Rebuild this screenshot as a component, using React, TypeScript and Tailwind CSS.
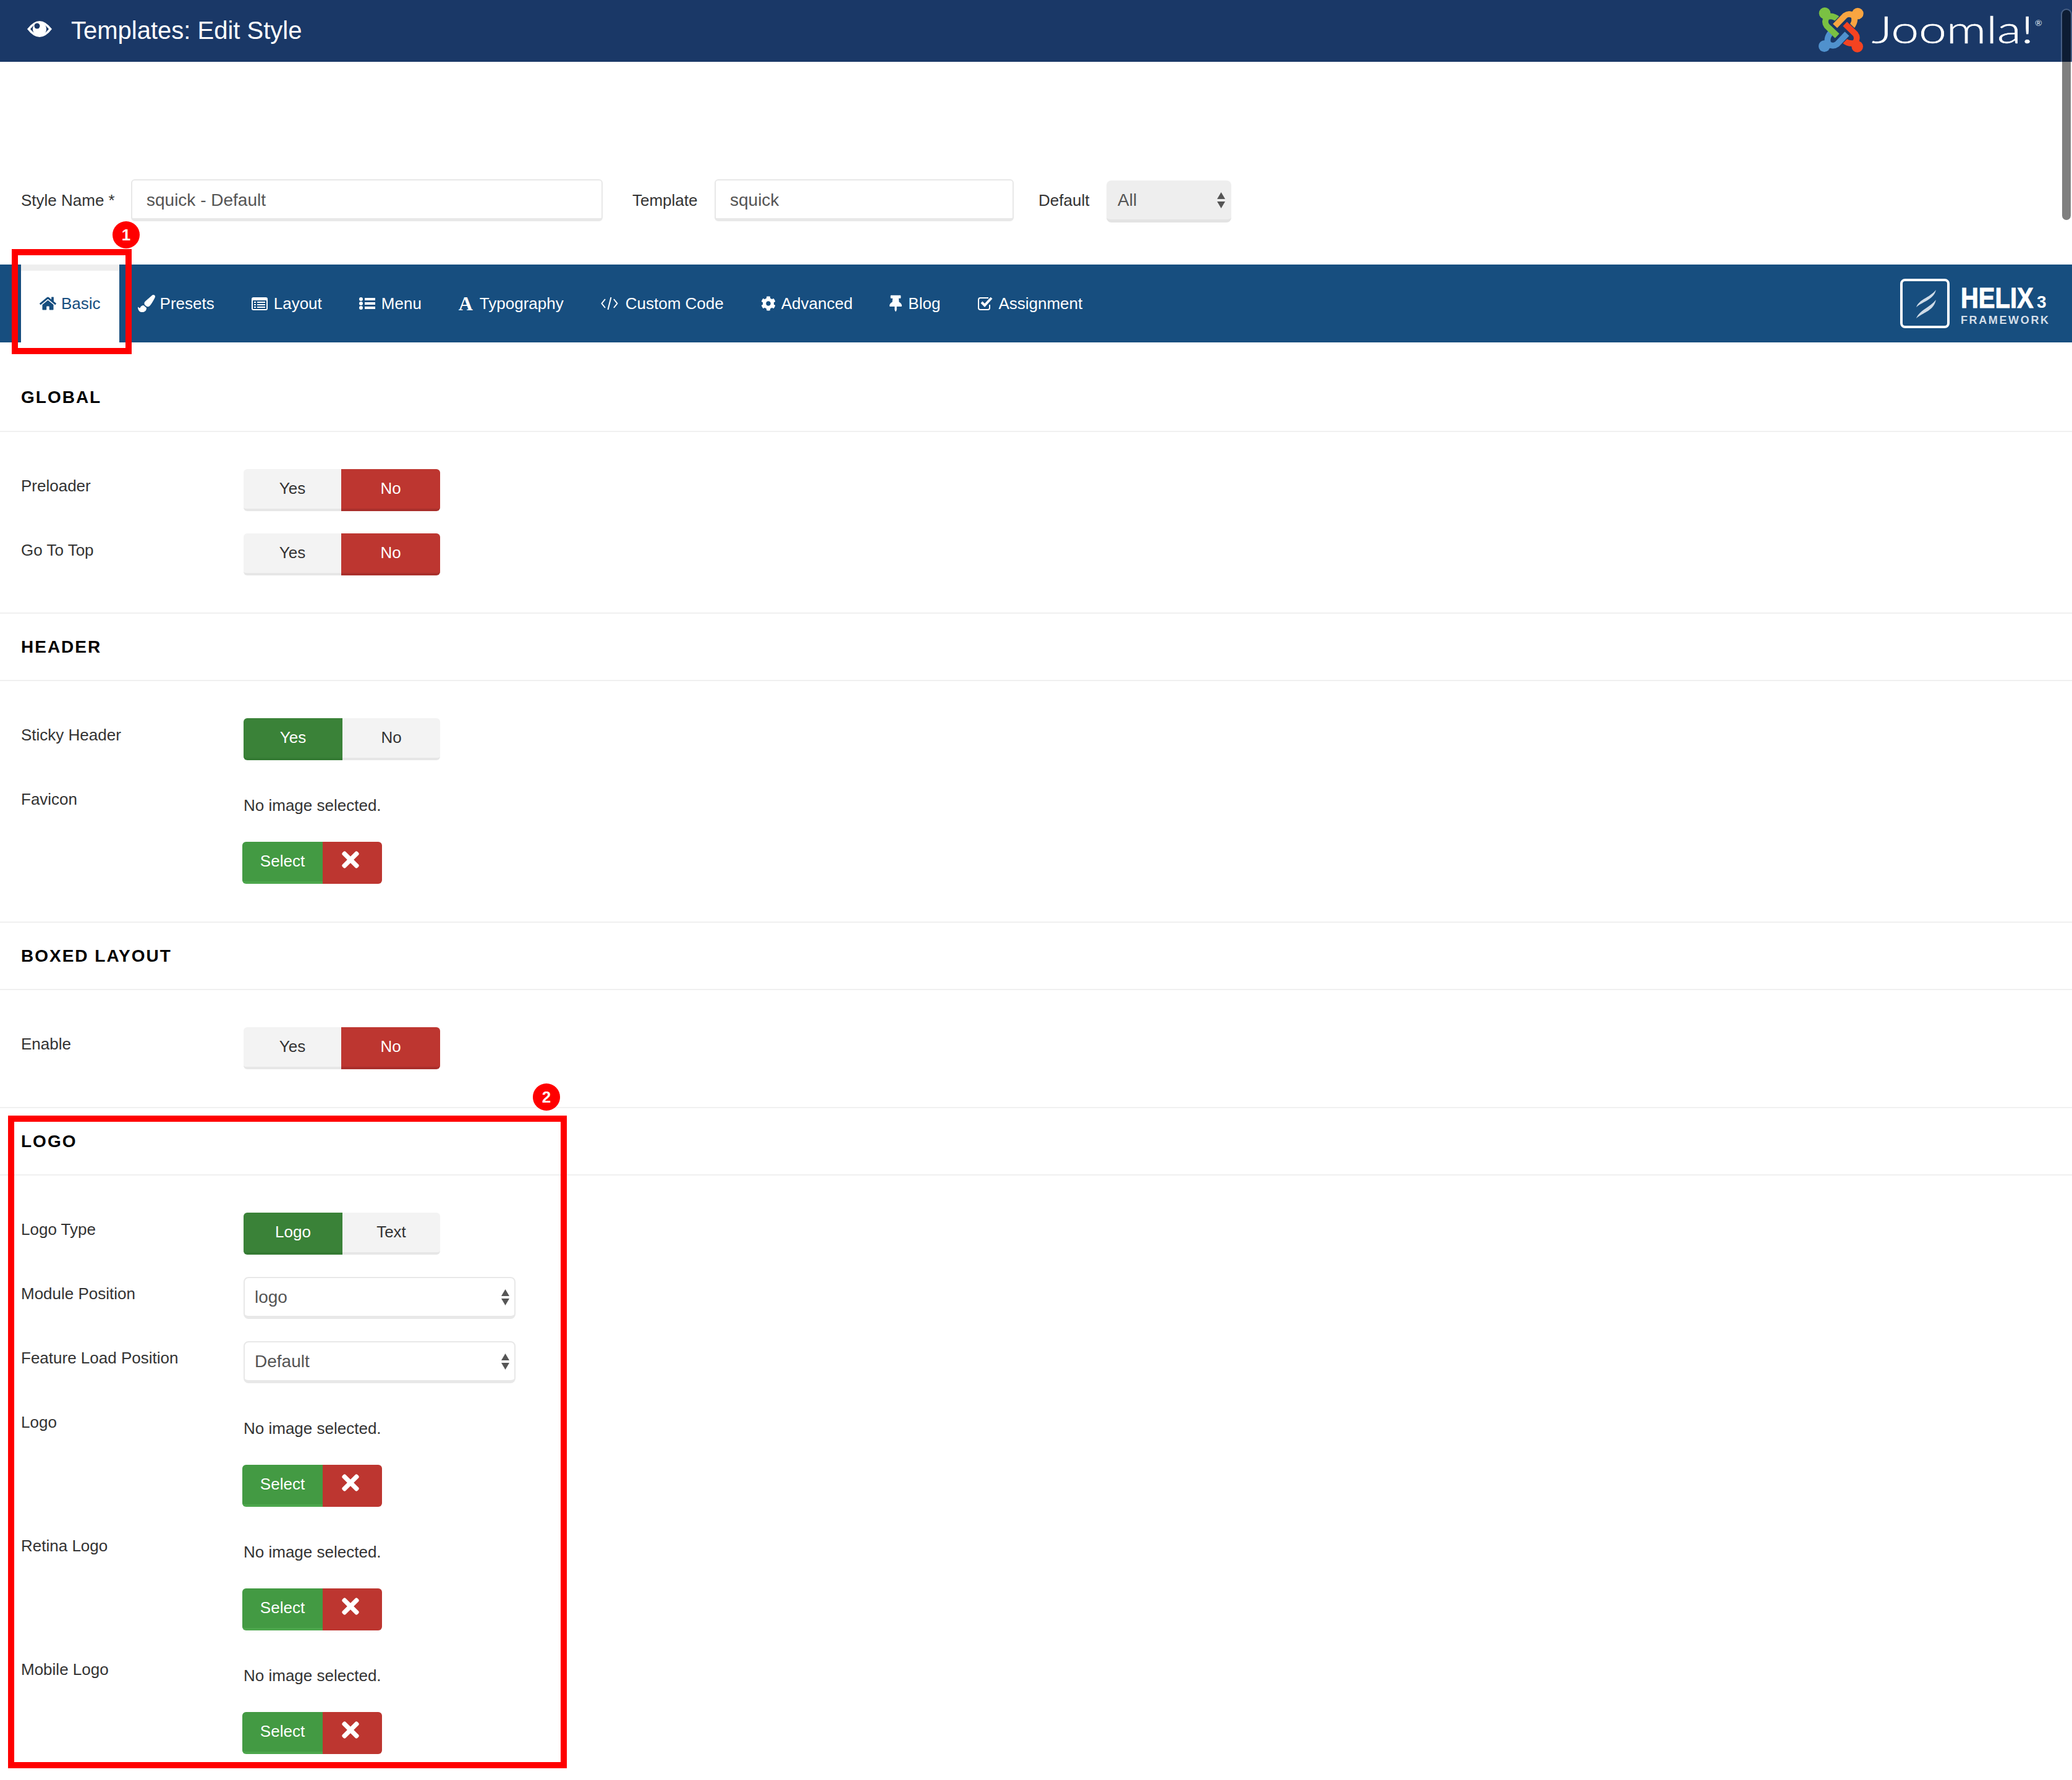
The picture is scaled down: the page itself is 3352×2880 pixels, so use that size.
import type {ReactNode} from 'react';
import {FaCog, FaHome, FaPaintBrush, FaThumbtack, FaTimes} from 'react-icons/fa';

type Tab = {label: string; icon: ReactNode; gap: string; active?: boolean};

const CodeIcon = () => (
  <svg viewBox="0 0 28 24" className="h-[24px] w-[28px]" fill="none" stroke="currentColor" strokeWidth="2">
    <path d="M7 5 1.500 12 7 19M21 5l5.500 7L21 19M16.500 2l-5 20" />
  </svg>
);

const ListIcon = () => (
  <svg viewBox="0 0 26 20" className="h-[20px] w-[26px] fill-current">
    <circle cx="3" cy="3" r="3" />
    <circle cx="3" cy="10" r="3" />
    <circle cx="3" cy="17" r="3" />
    <path d="M9 1h17v4H9zM9 8h17v4H9zM9 15h17v4H9z" />
  </svg>
);

const LayoutIcon = () => (
  <svg viewBox="0 0 26 21" className="h-[21px] w-[26px]">
    <rect width="26" height="21" rx="3" fill="currentColor" />
    <rect x="2" y="5" width="22" height="14" fill="#174e7f" />
    <path d="M4 7h3v2H4zM9 7h13v2H9zM4 11h3v2H4zM9 11h13v2H9zM4 15h3v2H4zM9 15h13v2H9z" fill="currentColor" />
  </svg>
);

const CheckIcon = () => (
  <svg viewBox="0 0 26 26" className="h-[26px] w-[26px]" fill="none" stroke="currentColor">
    <path d="M20 15v5a3 3 0 0 1-3 3H5a3 3 0 0 1-3-3V7a3 3 0 0 1 3-3h13" strokeWidth="2" />
    <path d="M7 11l5 5L23 4" strokeWidth="4" />
  </svg>
);

const TABS: Tab[] = [
  {label: 'Basic', icon: <FaHome className="h-[24px] w-[27px]" />, gap: 'w-[35px]', active: true},
  {label: 'Presets', icon: <FaPaintBrush className="h-[28px] w-[28px]" />, gap: 'w-[36px]'},
  {label: 'Layout', icon: <LayoutIcon />, gap: 'w-[36px]'},
  {label: 'Menu', icon: <ListIcon />, gap: 'w-[36px]'},
  {
    label: 'Typography',
    icon: <span className="font-['Liberation_Serif',serif] text-[32px] leading-none font-bold">A</span>,
    gap: 'w-[34px]'
  },
  {label: 'Custom Code', icon: <CodeIcon />, gap: 'w-[40px]'},
  {label: 'Advanced', icon: <FaCog className="h-[24px] w-[24px]" />, gap: 'w-[33px]'},
  {label: 'Blog', icon: <FaThumbtack className="h-[28px] w-[20px]" />, gap: 'w-[30px]'},
  {label: 'Assignment', icon: <CheckIcon />, gap: 'w-[34px]'}
];

const Arrows = () => (
  <svg viewBox="0 0 13 26" className="h-[26px] w-[13px] fill-[#555]">
    <path d="M6.500 0 13 11H0zM0 15h13L6.500 26z" />
  </svg>
);

function Toggle({left, right, value}: {left: string; right: string; value: 'left' | 'right' | 'green'}) {
  const on = 'text-white';
  const off = 'bg-[#f3f3f3] border-[#e6e6e6] text-[#333]';
  return (
    <div className="flex h-[68px] w-[318px] text-[26px]">
      <div
        className={`flex items-center justify-center rounded-l-[6px] border-b-[4px] pb-[2px] ${
          value === 'green' ? `w-[160px] bg-[#3a8238] border-[#347a33] ${on}` : `w-[158px] ${off}`
        }`}
      >
        {left}
      </div>
      <div
        className={`flex flex-1 items-center justify-center rounded-r-[6px] border-b-[4px] pb-[2px] ${
          value === 'green' ? off : `bg-[#bd3630] border-[#a92f2b] ${on}`
        }`}
      >
        {right}
      </div>
    </div>
  );
}

const SelectBox = ({value}: {value: string}) => (
  <div className="flex h-[68px] w-[440px] items-center justify-between rounded-[8px] border-2 border-b-[5px] border-[#e8e8e8] bg-white pr-[8px] pl-[16px] text-[28px] text-[#555]">
    {value}
    <Arrows />
  </div>
);

const MediaField = () => (
  <div className="flex flex-col">
    <div className="flex h-[74px] items-center text-[26px] leading-[36px] text-[#333]">No image selected.</div>
    <div className="mt-[22px] -ml-[2px] flex h-[68px] w-[226px] text-[26px] text-white">
      <div className="flex w-[130px] items-center justify-center rounded-l-[6px] border-b-[4px] border-[#4ca64c] bg-[#439a43] pb-[2px]">
        Select
      </div>
      <div className="flex flex-1 items-center justify-center rounded-r-[6px] bg-[#bd3630] pr-[6px] pb-[10px]">
        <FaTimes className="h-[40px] w-[28px]" />
      </div>
    </div>
  </div>
);

const Row = ({label, children}: {label: string; children: ReactNode}) => (
  <div className="mb-[36px] flex pl-[34px]">
    <div className="w-[360px] pt-[9px] text-[26px] leading-[36px] text-[#333]">{label}</div>
    {children}
  </div>
);

const Section = ({title, first, children}: {title: string; first?: boolean; children: ReactNode}) => (
  <section className={first ? 'pt-[34px] pb-[24px]' : 'pb-[25px]'}>
    <h3
      className={`flex h-[111px] items-center border-b-2 border-[#f0f0f0] pl-[34px] text-[28px] font-bold tracking-[2px] text-black ${
        first ? '' : 'border-t-2'
      }`}
    >
      {title}
    </h3>
    <div className="pt-[60px]">{children}</div>
  </section>
);

const JoomlaBand = ({color, angle}: {color: string; angle: number}) => (
  <g transform={`rotate(${angle} 174 129)`}>
    <path d="M160 78Q130 55 105 68Q90 90 105 110L155 158" fill="none" stroke="#1a3867" strokeWidth="36" />
    <path d="M160 78Q130 55 105 68Q90 90 105 110L155 158" fill="none" stroke={color} strokeWidth="29" />
    <circle cx="95" cy="48" r="28" fill={color} />
  </g>
);

const JoomlaLogo = () => (
  <svg viewBox="0 0 400 90" className="h-[90px] w-[400px]">
    <svg x="0" y="0" width="90" height="90" viewBox="41 -9 270 270" overflow="visible">
      <g transform="translate(0 -8)">
        <JoomlaBand color="#7ac143" angle={0} />
        <JoomlaBand color="#f9a541" angle={90} />
        <JoomlaBand color="#f44321" angle={180} />
        <JoomlaBand color="#5091cd" angle={270} />
        <path d="M115 120 155 158" fill="none" stroke="#7ac143" strokeWidth="29" />
      </g>
    </svg>
    <text
      x="94"
      y="65"
      fontFamily="Lato, sans-serif"
      fontWeight="300"
      fontSize="62"
      fill="#fff"
      stroke="#fff"
      strokeWidth="0.6"
      textLength="262"
      lengthAdjust="spacingAndGlyphs"
    >
      Joomla!
    </text>
    <text x="358" y="37" fontFamily="Lato, sans-serif" fontSize="14" fill="#dfe6ee">
      ®
    </text>
  </svg>
);

const HelixLogo = () => (
  <svg viewBox="0 0 244 80" className="h-[80px] w-[244px]">
    <rect x="2" y="2" width="76" height="76" rx="6" fill="none" stroke="#fff" strokeWidth="4" />
    <path d="M26 46C32 32 46 32 58 18C54 34 38 36 26 46Z" fill="#cfdbe7" />
    <path d="M26 64C32 50 46 48 58 34C54 52 38 54 26 64Z" fill="#cfdbe7" />
    <text
      transform="translate(98 47) scale(.85 1)"
      fontFamily="'Liberation Sans', sans-serif"
      fontWeight="700"
      fontSize="47"
      fill="#fff"
      stroke="#fff"
      strokeWidth="1"
    >
      HELIX
    </text>
    <text x="221" y="47" fontFamily="'Liberation Sans', sans-serif" fontWeight="700" fontSize="28" fill="#fff">
      3
    </text>
    <text
      x="98"
      y="73"
      fontFamily="'Liberation Sans', sans-serif"
      fontWeight="700"
      fontSize="18"
      fill="#d5dfe9"
      textLength="142"
    >
      FRAMEWORK
    </text>
  </svg>
);

export default function App() {
  return (
    <div className="relative h-[2880px] w-[3352px] overflow-hidden bg-white font-['Liberation_Sans',Arial,sans-serif] text-[#333]">
      <header className="flex h-[100px] items-center justify-between bg-[#1a3867] pr-[18px] pl-[44px] text-white">
        <div className="flex items-center">
          <svg viewBox="0 0 40 26" className="-mt-[6px] h-[26px] w-[40px]">
            <path d="M0 13Q10 0 20 0T40 13Q30 26 20 26T0 13Z" fill="#fff" />
            <path d="M5 13Q12 4 20 4T35 13Q28 22 20 22T5 13Z" fill="#1a3867" />
            <circle cx="20" cy="13" r="11" fill="#fff" />
            <circle cx="16" cy="8" r="4.500" fill="#1a3867" />
          </svg>
          <h1 className="-mt-[3px] ml-[31px] text-[40px] leading-none">Templates: Edit Style</h1>
        </div>
        <JoomlaLogo />
      </header>

      <div className="mt-[190px] flex pl-[34px] text-[26px]">
        <label className="w-[178px] leading-[68px]">Style Name *</label>
        <div className="flex h-[68px] w-[763px] items-center rounded-[6px] border-2 border-b-[5px] border-[#e8e8e8] pt-[3px] pl-[23px] text-[28px] text-[#555]">
          squick - Default
        </div>
        <label className="ml-[48px] w-[133px] leading-[68px]">Template</label>
        <div className="flex h-[68px] w-[484px] items-center rounded-[6px] border-2 border-b-[5px] border-[#e8e8e8] pt-[3px] pl-[23px] text-[28px] text-[#555]">
          squick
        </div>
        <label className="ml-[40px] w-[110px] leading-[68px]">Default</label>
        <div className="mt-[2px] flex h-[68px] w-[202px] items-center justify-between rounded-[8px] border-b-[5px] border-[#e3e3e3] bg-[#eeeeee] pr-[10px] pl-[18px] text-[28px] text-[#555]">
          All
          <Arrows />
        </div>
      </div>

      <nav className="mt-[68px] flex h-[126px] items-stretch justify-between bg-[#174e7f] pr-[34px] pl-[34px]">
        <div className="flex">
          {TABS.map(tab => (
            <div
              key={tab.label}
              className={`flex items-center border-t-[10px] px-[30px] pb-[10px] text-[26px] ${
                tab.active ? 'border-[#eeeeee] bg-white text-[#174e7f]' : 'border-transparent text-white'
              }`}
            >
              <span className={`flex items-center ${tab.gap}`}>{tab.icon}</span>
              {tab.label}
            </div>
          ))}
        </div>
        <div className="flex items-center">
          <HelixLogo />
        </div>
      </nav>

      <Section title="GLOBAL" first>
        <Row label="Preloader">
          <Toggle left="Yes" right="No" value="right" />
        </Row>
        <Row label="Go To Top">
          <Toggle left="Yes" right="No" value="right" />
        </Row>
      </Section>

      <Section title="HEADER">
        <Row label="Sticky Header">
          <Toggle left="Yes" right="No" value="green" />
        </Row>
        <Row label="Favicon">
          <MediaField />
        </Row>
      </Section>

      <Section title="BOXED LAYOUT">
        <Row label="Enable">
          <Toggle left="Yes" right="No" value="right" />
        </Row>
      </Section>

      <Section title="LOGO">
        <Row label="Logo Type">
          <Toggle left="Logo" right="Text" value="green" />
        </Row>
        <Row label="Module Position">
          <SelectBox value="logo" />
        </Row>
        <Row label="Feature Load Position">
          <SelectBox value="Default" />
        </Row>
        <Row label="Logo">
          <MediaField />
        </Row>
        <Row label="Retina Logo">
          <MediaField />
        </Row>
        <Row label="Mobile Logo">
          <MediaField />
        </Row>
      </Section>

      {/* annotations drawn over the screenshot */}
      <div className="absolute top-[403px] left-[19px] h-[170px] w-[194px] border-[10px] border-[#ff0000]" />
      <div className="absolute top-[358px] left-[182px] flex h-[44px] w-[44px] items-center justify-center rounded-full bg-[#ff0000] text-[26px] font-bold text-white">
        1
      </div>
      <div className="absolute top-[1805px] left-[13px] h-[1056px] w-[904px] border-[10px] border-[#ff0000]" />
      <div className="absolute top-[1753px] left-[862px] flex h-[44px] w-[44px] items-center justify-center rounded-full bg-[#ff0000] text-[26px] font-bold text-white">
        2
      </div>

      {/* overlay scrollbar */}
      <div className="absolute top-[14px] right-0 h-[344px] w-[18px] rounded-[10px] border-2 border-white/20 bg-black/50 bg-clip-padding" />
    </div>
  );
}
